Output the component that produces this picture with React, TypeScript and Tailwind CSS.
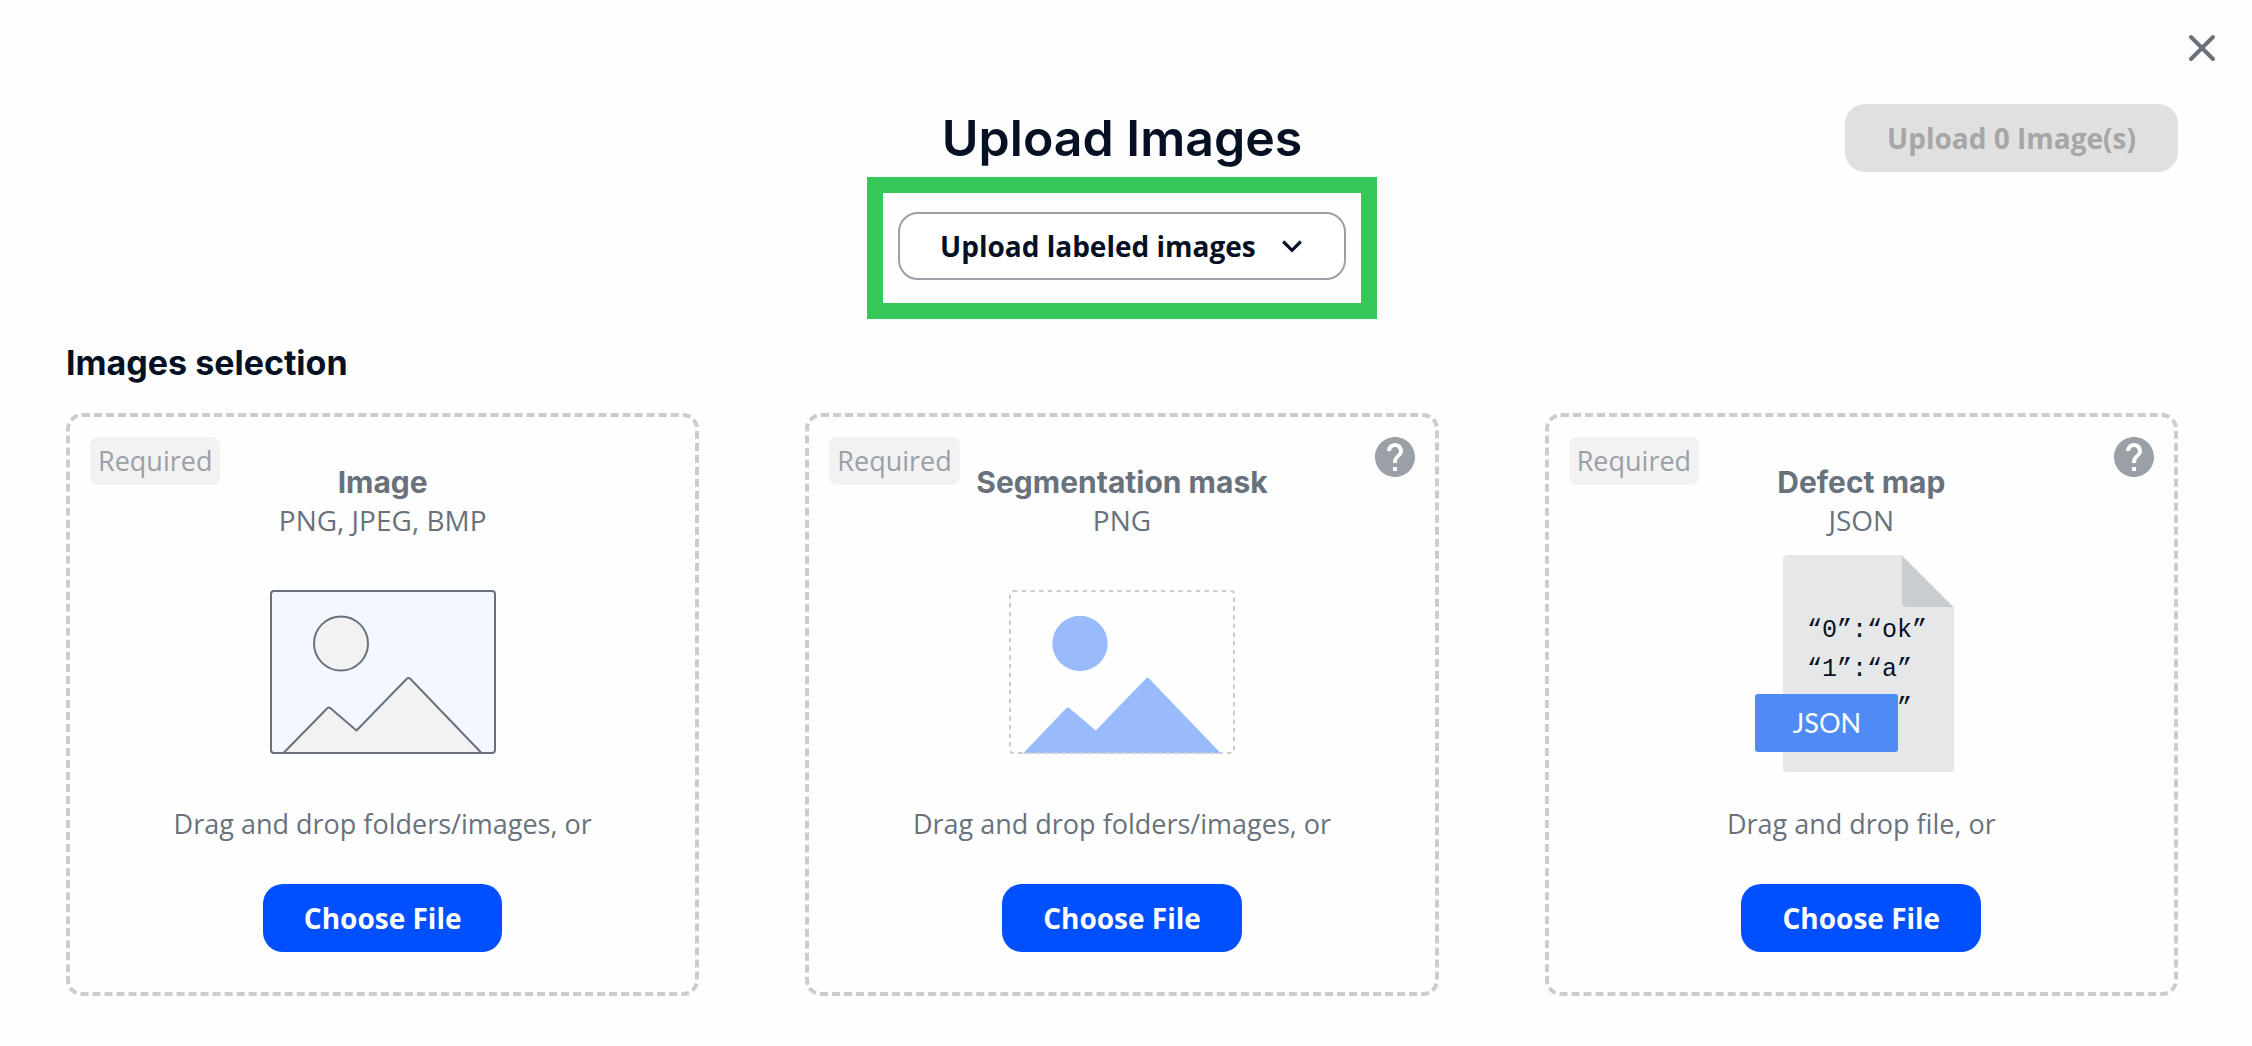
import { useState } from "react"
import type { ReactNode } from "react"
import { MdHelp } from "react-icons/md"

type UploadCard = {
  title: string
  formats: string
  hint: string
  help: boolean
  picture: ReactNode
}

function ImagePicture() {
  return (
    <svg width="228" height="168" viewBox="0 0 228 168" fill="none" stroke="#69727c" strokeWidth="2" aria-hidden="true">
      <rect x="2" y="3" width="224" height="162" rx="3" fill="#f3f7ff" />
      <circle cx="72" cy="55.500" r="27" fill="#f2f2f2" />
      <path d="M14.500 165 L58 120.500 Q59.700 118.700 61.500 120.200 L87.500 142.500 L137.500 91 Q139.500 89 141.500 91 L212.500 165 Z" fill="#f2f2f2" strokeLinejoin="round" />
      <path d="M4 165 H224" />
    </svg>
  )
}

function MaskPicture() {
  return (
    <svg width="228" height="168" viewBox="0 0 228 168" fill="none" aria-hidden="true">
      <circle cx="72" cy="55.500" r="27.700" fill="#98bbfb" />
      <path d="M15 165.500 L58 120.500 Q59.700 118.700 61.500 120.200 L87.800 142.500 L137.500 91 Q139.500 88.500 141.500 91 L213 165.500 Z" fill="#98bbfb" />
      <rect x="2" y="3" width="224" height="162" rx="3" stroke="#c9cdd1" strokeWidth="2" strokeDasharray="4.500 4.200" />
    </svg>
  )
}

function JsonPicture() {
  return (
    <svg width="212" height="234" viewBox="0 0 212 234" aria-hidden="true">
      <path d="M32 0 H147 L199 52 V213 Q199 217 195 217 H32 Q28 217 28 213 V4 Q28 0 32 0 Z" fill="#e5e7e9" />
      <path d="M147 1 L198 52 H151 Q147 52 147 48 Z" fill="#c9cdd0" />
      {/* the tag hides the start of the last line */}
      <g className="font-['Liberation_Mono',monospace]" fontSize="25" fill="#051123">
        <text x="52" y="82">“0”:“ok”</text>
        <text x="52" y="121">“1”:“a”</text>
        <text x="142" y="160">”</text>
      </g>
      <rect x="0" y="139" width="143" height="58" rx="3" fill="#508bf5" />
      <text x="72" y="178" textAnchor="middle" fontSize="27" fill="#fff" className="font-['Lato',sans-serif]">JSON</text>
    </svg>
  )
}

const cards: UploadCard[] = [
  { title: "Image", formats: "PNG, JPEG, BMP", hint: "Drag and drop folders/images, or", help: false, picture: <ImagePicture /> },
  { title: "Segmentation mask", formats: "PNG", hint: "Drag and drop folders/images, or", help: true, picture: <MaskPicture /> },
  { title: "Defect map", formats: "JSON", hint: "Drag and drop file, or", help: true, picture: <JsonPicture /> },
]

export default function App() {
  const [mode, setMode] = useState<string>("labeled")

  return (
    <div className="min-h-screen bg-[#fefefe] pt-7 pb-12 font-['Open_Sans',sans-serif] text-[#051123]">
      <div className="flex justify-end pr-[30px]">
        <button type="button" aria-label="Close" className="text-[#69727c]">
          <svg width="40" height="40" viewBox="0 0 40 40" fill="none" stroke="currentColor" strokeWidth="4" strokeLinecap="round">
            <path d="M9 9 L31 31 M31 9 L9 31" />
          </svg>
        </button>
      </div>

      <main className="mt-9 pr-[74px] pl-[66px]">
        <header className="grid grid-cols-[1fr_auto_1fr] items-center">
          <h1 className="col-start-2 font-['Inter',sans-serif] text-[50px] leading-[68px] font-semibold">Upload Images</h1>
          <button type="button" disabled className="h-[68px] justify-self-end rounded-[20px] bg-[#e0e0e0] px-[42px] text-[28px] font-bold text-[#a6a6a6]">
            Upload 0 Image(s)
          </button>
        </header>

        {/* Upload mode */}
        <div className="mx-auto mt-[5px] w-fit border-16 border-[#36c95a] px-[15px] pt-[19px] pb-[23px]">
          <div className="relative">
            <select
              aria-label="Upload mode"
              value={mode}
              onChange={(e) => setMode(e.target.value)}
              className="h-[68px] w-[448px] appearance-none rounded-[20px] border-2 border-[#9ba0a7] bg-white pl-[40px] text-[28px] font-bold"
            >
              <option value="labeled">Upload labeled images</option>
              <option value="unlabeled">Upload unlabeled images</option>
            </select>
            <svg className="pointer-events-none absolute top-7 right-11" width="20" height="13" viewBox="0 0 20 13" fill="none" stroke="currentColor" strokeWidth="3.200">
              <path d="M1.200 1.500 L10 10.300 L18.800 1.500" />
            </svg>
          </div>
        </div>

        <h2 className="mt-6 font-['Inter',sans-serif] text-[34px] leading-10 font-bold">Images selection</h2>

        <div className="mt-[30px] grid grid-cols-3 gap-[106px]">
          {cards.map((card) => (
            <section key={card.title} className="relative flex flex-col items-center rounded-2xl border-4 border-dashed border-[#c9cdd0] pt-[46px] pb-10">
              <span className="absolute top-5 left-5 rounded-lg bg-[#f2f2f2] px-2 text-[27px] leading-[48px] text-[#9ba0a7]">Required</span>
              {card.help && (
                <button type="button" aria-label={"Help: " + card.title} className="absolute top-4 right-4 text-[#9ba0a7]">
                  <MdHelp className="size-12" />
                </button>
              )}
              <h3 className="font-['Inter',sans-serif] text-[30px] leading-[38px] font-bold text-[#69727c]">{card.title}</h3>
              <p className="text-[28px] leading-[38px] text-[#69727c]">{card.formats}</p>
              <div className="flex h-[266px] items-center">{card.picture}</div>
              <p className="text-[27px] leading-[38px] text-[#69727c]">{card.hint}</p>
              <button type="button" className="mt-[41px] h-[68px] rounded-[20px] bg-[#0050ff] px-[41px] text-[28px] font-bold text-white">
                Choose File
              </button>
            </section>
          ))}
        </div>
      </main>
    </div>
  )
}
